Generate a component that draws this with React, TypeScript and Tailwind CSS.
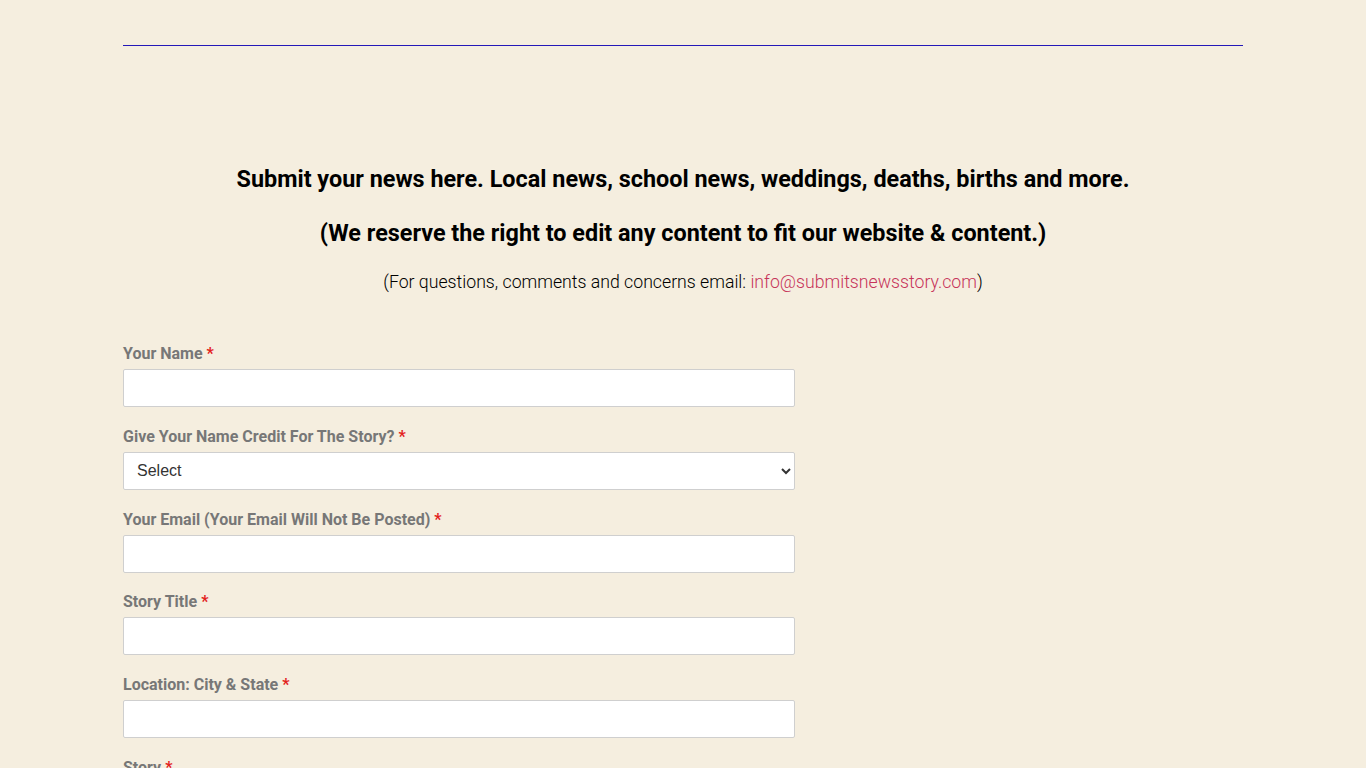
import React from "react";

const fields: { label: string; type: "input" | "select" }[] = [
  { label: "Your Name", type: "input" },
  { label: "Give Your Name Credit For The Story?", type: "select" },
  { label: "Your Email (Your Email Will Not Be Posted)", type: "input" },
  { label: "Story Title", type: "input" },
  { label: "Location: City & State", type: "input" },
  { label: "Story", type: "input" },
];

export default function App() {
  return (
    <div
      className="min-h-screen bg-[#f5eedf] text-black"
      style={{ fontFamily: "Roboto, 'Noto Sans', sans-serif" }}
    >
      <div className="mx-auto w-[1120px] pt-[45px] pb-10">
        <div className="h-px bg-[#2418b8]" />

        <div className="pt-[119px] text-center">
          <h2 className="text-[23.4px] font-bold leading-[28px]">
            Submit your news here. Local news, school news, weddings, deaths, births and more.
          </h2>
          <h2 className="mt-[26px] text-[23.4px] font-bold leading-[28px]">
            (We reserve the right to edit any content to fit our website &amp; content.)
          </h2>
          <p className="mt-[22px] text-[17.7px] font-light leading-[27px]">
            (For questions, comments and concerns email:{" "}
            <a className="text-[#c7345a]" href="#">info@submitsnewsstory.com</a>)
          </p>
        </div>

        <form className="mt-[46px] flex w-[672px] flex-col gap-[17.75px]">
          {fields.map((f) => (
            <div key={f.label} className="flex flex-col">
              <label className="text-[16px] font-bold leading-[24px] text-[#777777]">
                {f.label} <span className="text-[#e3211c]">*</span>
              </label>
              {f.type === "select" ? (
                <select
                  className="mt-[3px] h-[38px] w-full rounded-[2px] border border-[#cfcfcf] bg-white pl-[9px] pr-2 text-[16px] text-[#333]"
                  style={{ fontFamily: "'Liberation Sans', Arial, sans-serif" }}
                  defaultValue=""
                >
                  <option value="">Select</option>
                  <option value="yes">Yes</option>
                  <option value="no">No</option>
                </select>
              ) : (
                <input
                  type="text"
                  className="mt-[3px] h-[38px] w-full rounded-[2px] border border-[#cfcfcf] bg-white px-3 text-[16px]"
                />
              )}
            </div>
          ))}
        </form>
      </div>
    </div>
  );
}
